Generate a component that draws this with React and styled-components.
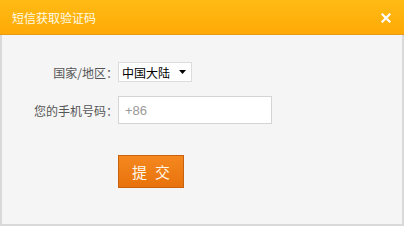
import React, { useState } from 'react';
import styled, { createGlobalStyle } from 'styled-components';

const GlobalStyle = createGlobalStyle`
  html, body {
    margin: 0;
    padding: 0;
    background: #ffffff;
  }
  body {
    font-family: "Noto Sans CJK SC", "Liberation Sans", sans-serif;
  }
`;

const Dialog = styled.div`
  width: 404px;
  height: 226px;
  box-sizing: border-box;
  display: flex;
  flex-direction: column;
  background: #f4f4f4;
`;

const Header = styled.div`
  height: 35px;
  box-sizing: border-box;
  display: flex;
  align-items: center;
  justify-content: space-between;
  padding: 0 13px 0 12px;
  background: linear-gradient(#ffbb14, #ffa906);
  border-bottom: 1px solid #e39b18;
`;

const Title = styled.span`
  color: #fffbe8;
  font-size: 12px;
`;

const Close = styled.button`
  background: none;
  border: 0;
  padding: 0;
  width: 10px;
  height: 10px;
  cursor: pointer;
  display: flex;
  margin-top: 2px;
`;

const Body = styled.div`
  flex: 1;
  border: 2px solid #d9d9d9;
  border-top: 0;
  background: #f5f5f5;
  padding: 27px 0 0 0;
  display: flex;
  flex-direction: column;
`;

const Row = styled.div`
  display: flex;
  align-items: center;
  height: ${p => p.h}px;
  margin-bottom: ${p => p.mb || 0}px;
`;

const Label = styled.label`
  width: 116px;
  text-align: right;
  font-size: 12px;
  color: #555;
  box-sizing: border-box;
`;

const Select = styled.div`
  width: 74px;
  height: 20px;
  box-sizing: border-box;
  border: 1px solid #dcdcdc;
  background: #fff;
  display: flex;
  align-items: center;
  justify-content: space-between;
  padding: 0 5px 0 3px;
  font-size: 12px;
  color: #000;
`;

const Input = styled.input`
  width: 154px;
  height: 28px;
  box-sizing: border-box;
  border: 1px solid #d4d4d4;
  background: #fff;
  padding: 0 6px;
  font-family: "Liberation Sans", sans-serif;
  font-size: 13px;
  color: #999;
  outline: none;
`;

const ButtonRow = styled.div`
  padding-left: 116px;
  margin-top: 31px;
`;

const Submit = styled.button`
  width: 66px;
  height: 33px;
  box-sizing: border-box;
  border: 1px solid #c8620f;
  background: linear-gradient(#f5881f, #e8720d);
  color: #fff8e8;
  font-family: "Noto Sans CJK SC", sans-serif;
  font-size: 15px;
  letter-spacing: 8px;
  padding: 0 0 0 8px;
  cursor: pointer;
`;

export default function App() {
  const [phone, setPhone] = useState('+86');
  return (
    <>
      <GlobalStyle />
      <Dialog>
        <Header>
          <Title>短信获取验证码</Title>
          <Close aria-label="close">
            <svg width="10" height="10" viewBox="0 0 10 10">
              <path d="M1.5 1.5 L8.5 8.5 M8.5 1.5 L1.5 8.5" stroke="#fff" strokeWidth="2.2" strokeLinecap="square" />
            </svg>
          </Close>
        </Header>
        <Body>
          <Row h={20} mb={14}>
            <Label>国家/地区：</Label>
            <Select>
              <span>中国大陆</span>
              <svg width="7" height="4" viewBox="0 0 7 4">
                <path d="M0 0 L7 0 L3.5 4 Z" fill="#000" />
              </svg>
            </Select>
          </Row>
          <Row h={28}>
            <Label>您的手机号码：</Label>
            <Input value={phone} onChange={e => setPhone(e.target.value)} />
          </Row>
          <ButtonRow>
            <Submit>提交</Submit>
          </ButtonRow>
        </Body>
      </Dialog>
    </>
  );
}
